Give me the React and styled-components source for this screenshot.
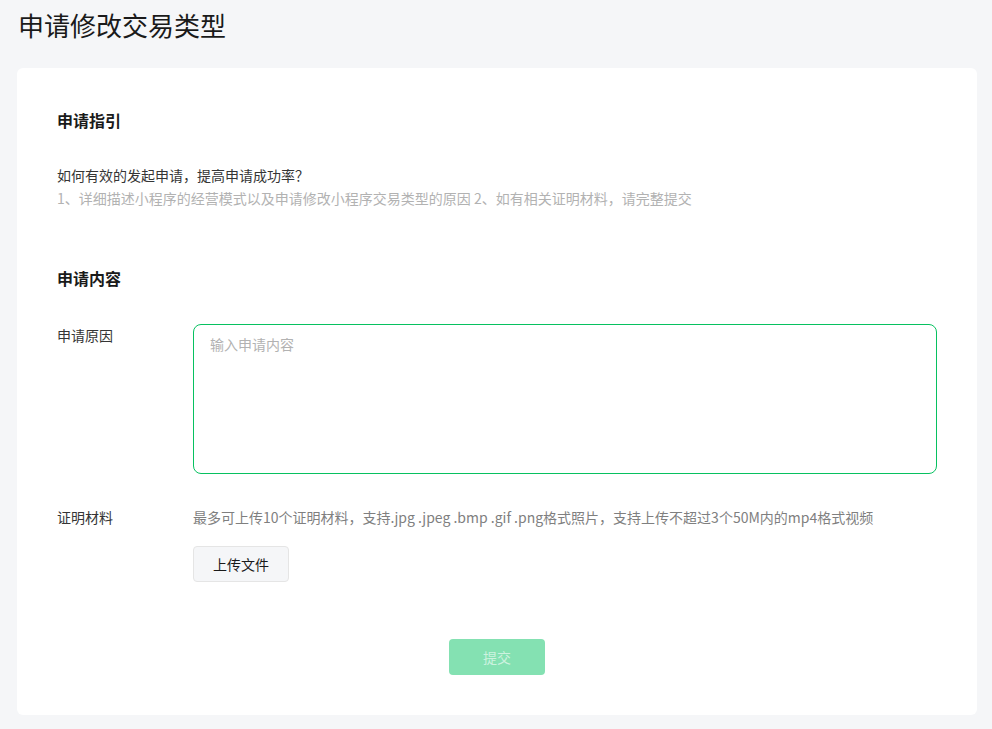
import styled, { createGlobalStyle } from "styled-components";
import { useState } from "react";

const GlobalStyle = createGlobalStyle`
    html, body {
        margin: 0;
        padding: 0;
        background-color: #F5F6F8;
        font-family: "Noto Sans CJK SC", "Noto Sans", sans-serif;
    }
    * {
        box-sizing: border-box;
    }
`

export default function App() {

    const [reason, setReason] = useState("");

    return (
        <Page>
            <GlobalStyle />
            <Title>申请修改交易类型</Title>
            <Card>
                <Section>
                    <h2>申请指引</h2>
                    <Question>如何有效的发起申请，提高申请成功率？</Question>
                    <Tips>1、详细描述小程序的经营模式以及申请修改小程序交易类型的原因 2、如有相关证明材料，请完整提交</Tips>
                </Section>
                <Section>
                    <h2>申请内容</h2>
                    <FormRow>
                        <Label>申请原因</Label>
                        <TextArea
                            autoFocus
                            placeholder="输入申请内容"
                            value={reason}
                            onChange={(e) => setReason(e.target.value)}
                        />
                    </FormRow>
                    <FormRow $gap={32}>
                        <Label>证明材料</Label>
                        <Field>
                            <Hint>最多可上传10个证明材料，支持.jpg .jpeg .bmp .gif .png格式照片，支持上传不超过3个50M内的mp4格式视频</Hint>
                            <UploadButton>上传文件</UploadButton>
                        </Field>
                    </FormRow>
                </Section>
                <Footer>
                    <SubmitButton disabled={!reason}>提交</SubmitButton>
                </Footer>
            </Card>
        </Page>
    )
}

const Page = styled.div`
    padding: 8px 15px 15px 17px;
`
const Title = styled.h1`
    margin: 0 0 0 1px;
    font-size: 26px;
    font-weight: 400;
    line-height: 34px;
    color: #1A1A1A;
`
const Card = styled.div`
    margin-top: 26px;
    background-color: #FFFFFF;
    border-radius: 6px;
    padding: 40px 40px 40px 40px;
`
const Section = styled.div`
    margin-bottom: 57px;
    &:last-of-type {
        margin-bottom: 0;
    }
h2 {
    margin: 0;
    font-size: 16px;
    font-weight: 700;
    line-height: 24px;
    color: #1A1A1A;
}
`
const Question = styled.p`
    margin: 32px 0 0 0;
    font-size: 14px;
    line-height: 22px;
    color: #353535;
`
const Tips = styled.p`
    margin: 1px 0 0 0;
    font-size: 14px;
    line-height: 22px;
    color: #B2B2B2;
`
const FormRow = styled.div`
    display: flex;
    align-items: flex-start;
    margin-top: ${(props) => props.$gap || 34}px;
`
const Label = styled.div`
    width: 136px;
    flex-shrink: 0;
    font-size: 14px;
    line-height: 22px;
    color: #353535;
`
const TextArea = styled.textarea`
    flex: 1;
    height: 150px;
    resize: none;
    border: 1px solid #07C160;
    border-radius: 8px;
    padding: 8px 16px;
    font-family: inherit;
    font-size: 14px;
    line-height: 22px;
    color: #1A1A1A;
    caret-color: #1A1A1A;
    outline: none;
&::placeholder {
    color: #B2B2B2;
}
`
const Field = styled.div`
    flex: 1;
    display: flex;
    flex-direction: column;
    align-items: flex-start;
`
const Hint = styled.div`
    font-size: 14px;
    line-height: 22px;
    color: #7F7F7F;
`
const UploadButton = styled.button`
    margin-top: 18px;
    width: 96px;
    height: 36px;
    border: 1px solid #E5E5E5;
    border-radius: 4px;
    background-color: #F5F6F8;
    font-family: inherit;
    font-size: 14px;
    color: #1A1A1A;
    cursor: pointer;
`
const Footer = styled.div`
    display: flex;
    justify-content: center;
    margin-top: 55px;
`
const SubmitButton = styled.button`
    width: 96px;
    height: 36px;
    border: none;
    border-radius: 4px;
    background-color: #07C160;
    font-family: inherit;
    font-size: 14px;
    color: #FFFFFF;
    cursor: pointer;
&:disabled {
    background-color: #84E1B2;
    color: rgba(255, 255, 255, 0.6);
    cursor: not-allowed;
}
`
